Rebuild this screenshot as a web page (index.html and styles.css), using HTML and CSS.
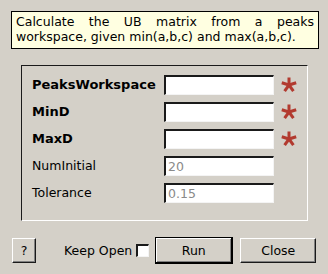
FILE: index.html
```html
<!DOCTYPE html>
<html lang="en">
<head>
    <meta charset="UTF-8">
    <meta name="viewport" content="width=device-width, initial-scale=1.0">
    <title>Find UB Using Min Max D</title>
    <link rel="stylesheet" href="styles.css">
</head>
<body>
    <div class="dialog">
        <p class="description">
            <span class="first-line">Calculate the UB matrix from a peaks</span>
            <span>workspace, given min(a,b,c) and max(a,b,c).</span>
        </p>

        <div class="group-box">
            <label class="required" for="peaksWorkspace">PeaksWorkspace</label>
            <input type="text" id="peaksWorkspace">
            <svg class="star" viewBox="0 0 16 16"><g stroke="#b23a2f" stroke-width="3" stroke-linecap="butt"><line x1="8" y1="8" x2="8" y2="0.5"/><line x1="8" y1="8" x2="15.2" y2="5.7"/><line x1="8" y1="8" x2="12.4" y2="14.1"/><line x1="8" y1="8" x2="3.6" y2="14.1"/><line x1="8" y1="8" x2="0.8" y2="5.7"/></g></svg>

            <label class="required" for="minD">MinD</label>
            <input type="text" id="minD">
            <svg class="star" viewBox="0 0 16 16"><g stroke="#b23a2f" stroke-width="3" stroke-linecap="butt"><line x1="8" y1="8" x2="8" y2="0.5"/><line x1="8" y1="8" x2="15.2" y2="5.7"/><line x1="8" y1="8" x2="12.4" y2="14.1"/><line x1="8" y1="8" x2="3.6" y2="14.1"/><line x1="8" y1="8" x2="0.8" y2="5.7"/></g></svg>

            <label class="required" for="maxD">MaxD</label>
            <input type="text" id="maxD">
            <svg class="star" viewBox="0 0 16 16"><g stroke="#b23a2f" stroke-width="3" stroke-linecap="butt"><line x1="8" y1="8" x2="8" y2="0.5"/><line x1="8" y1="8" x2="15.2" y2="5.7"/><line x1="8" y1="8" x2="12.4" y2="14.1"/><line x1="8" y1="8" x2="3.6" y2="14.1"/><line x1="8" y1="8" x2="0.8" y2="5.7"/></g></svg>

            <label for="numInitial">NumInitial</label>
            <input type="text" id="numInitial" placeholder="20">
            <span></span>

            <label for="tolerance">Tolerance</label>
            <input type="text" id="tolerance" placeholder="0.15">
            <span></span>
        </div>

        <div class="button-bar">
            <button class="help-button">?</button>
            <label class="keep-open" for="keepOpen">Keep Open <span class="checkbox" id="keepOpen"></span></label>
            <button class="run-button">Run</button>
            <button class="close-button">Close</button>
        </div>
    </div>
</body>
</html>
```

FILE: styles.css
```css
* {
    margin: 0;
    padding: 0;
    box-sizing: border-box;
    font-family: "DejaVu Sans", sans-serif;
}

body {
    background-color: #d4d0c8;
    font-size: 12.5px;
    color: #000;
}

.dialog {
    width: 328px;
    height: 274px;
    padding-top: 11px;
}

.description {
    margin-left: 11px;
    width: 308px;
    height: 38px;
    padding: 2px 4px 0 4px;
    border: 1px solid #000;
    background-color: #ffffe1;
    line-height: 15px;
}

.description span {
    display: block;
    white-space: nowrap;
}

.description .first-line {
    text-align: justify;
    text-align-last: justify;
    white-space: normal;
}

.group-box {
    margin: 16px 0 0 21px;
    width: 287px;
    height: 156px;
    padding: 9px 0 0 10px;
    border: 1px solid;
    border-color: #1a1a1a #fff #fff #1a1a1a;
    display: grid;
    grid-template-columns: 132px 110px 16px;
    grid-auto-rows: 20px;
    row-gap: 7px;
    align-items: center;
}

.group-box label {
    line-height: 20px;
    white-space: nowrap;
}

.group-box .required {
    font-weight: bold;
    font-size: 13px;
}

.group-box input {
    width: 110px;
    height: 20px;
    border-style: solid;
    border-width: 2px 1px 1px 2px;
    border-color: #1a1a1a #f4f4f4 #f4f4f4 #1a1a1a;
    background-color: #fff;
    font-size: 12.5px;
    padding: 0 2px;
    outline: none;
}

.group-box input::placeholder {
    color: #8a8a8a;
}

.star {
    width: 16px;
    height: 16px;
    margin-left: 7px;
}

.button-bar {
    margin-top: 16px;
    display: flex;
    align-items: center;
    height: 27px;
}

button {
    height: 25px;
    background-color: #d4d0c8;
    font-size: 12.5px;
    border: 1px solid;
    border-color: #fff #1a1a1a #1a1a1a #fff;
    box-shadow: inset -1px -1px #808080;
}

.help-button {
    width: 24px;
    margin-left: 12px;
}

.keep-open {
    margin-left: 28px;
    display: flex;
    align-items: center;
    white-space: nowrap;
}

.checkbox {
    width: 13px;
    height: 13px;
    margin-left: 4px;
    background-color: #fff;
    border-style: solid;
    border-width: 2px 1px 1px 2px;
    border-color: #1a1a1a #f4f4f4 #f4f4f4 #1a1a1a;
}

.run-button {
    width: 78px;
    height: 27px;
    margin-left: 6px;
    border: 1px solid #000;
    border-width: 1px 2px 2px 1px;
    box-shadow: inset 1px 1px #fff, inset -1px -1px #808080;
}

.close-button {
    width: 76px;
    margin-left: 7px;
}
```
